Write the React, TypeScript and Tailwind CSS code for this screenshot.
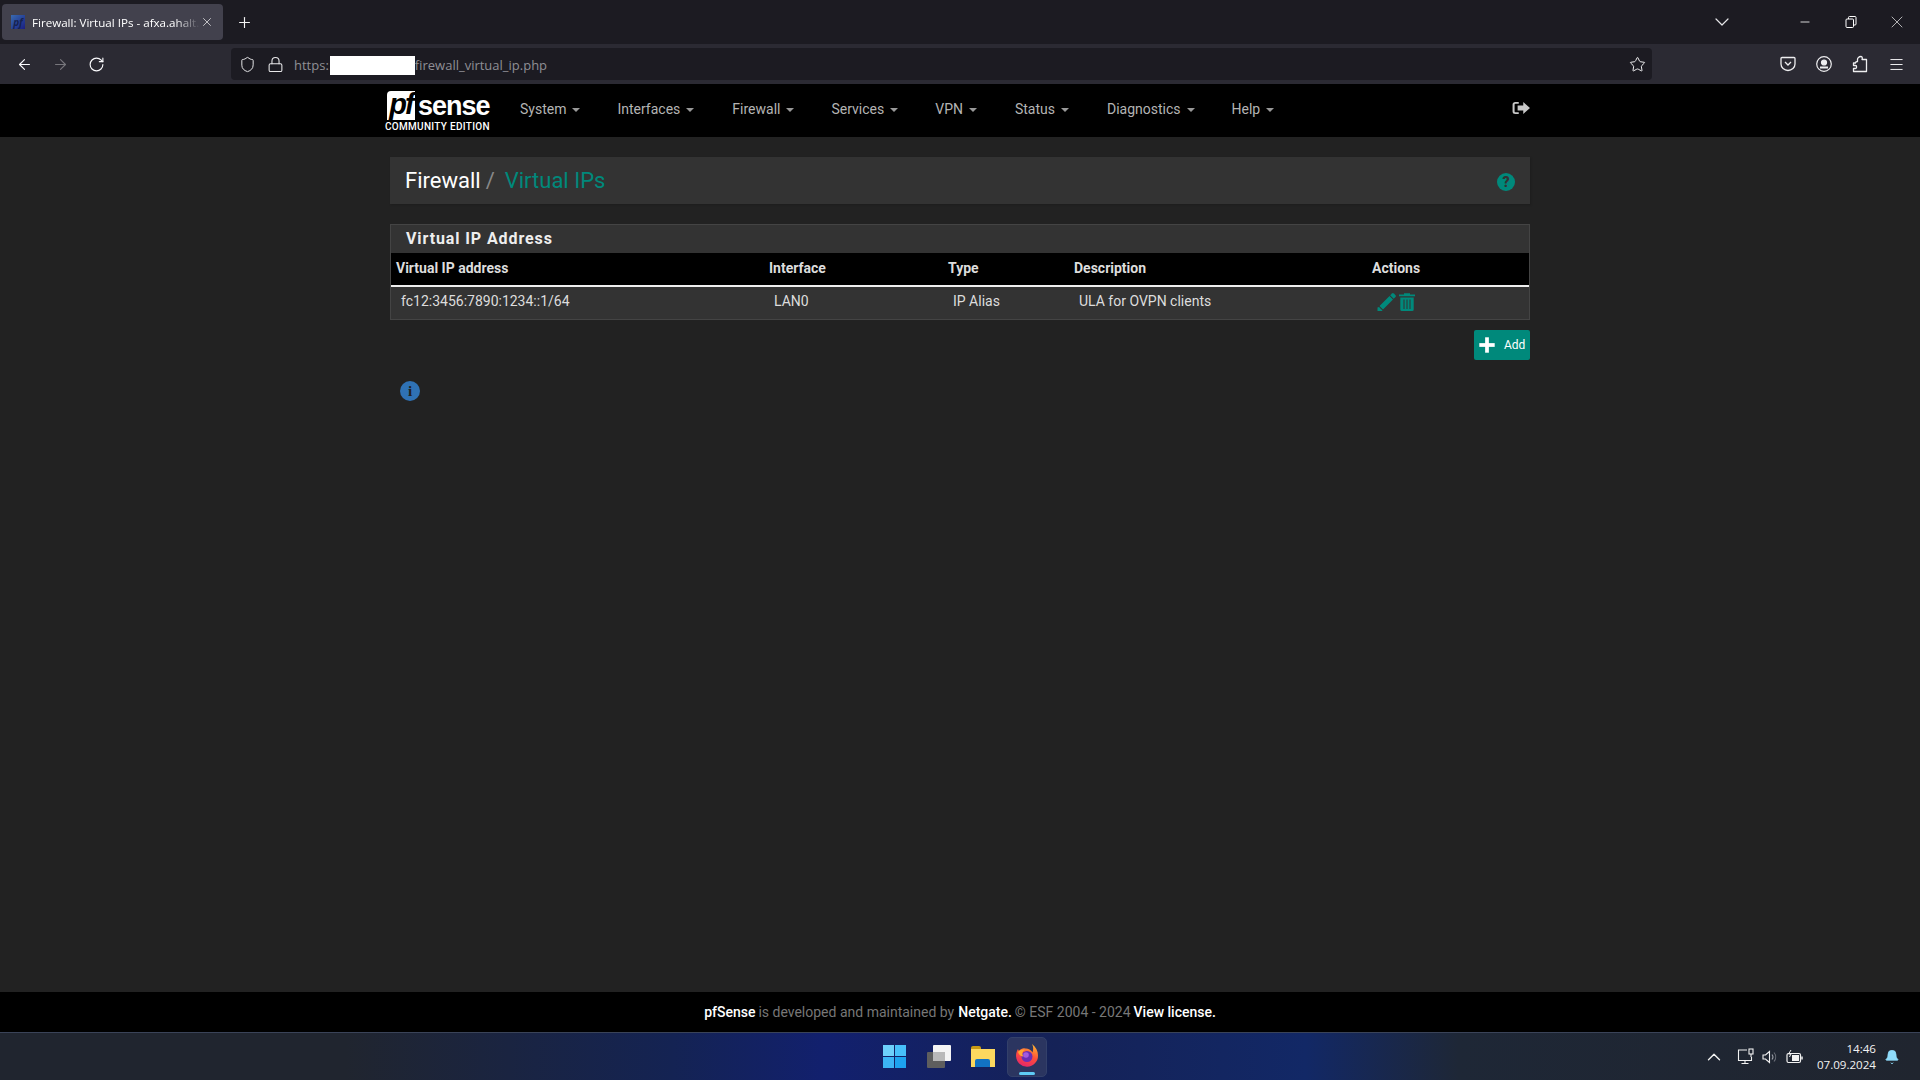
import React from 'react';
import { ArrowLeft, ArrowRight, RotateCw, Shield, Lock, Star, X, Plus, ChevronDown, Minus, Menu, ChevronUp, Bell } from 'lucide-react';

const navItems = ['System', 'Interfaces', 'Firewall', 'Services', 'VPN', 'Status', 'Diagnostics', 'Help'];
const navGaps = ['mr-[37px]', 'mr-[38px]', 'mr-[37px]', 'mr-[37px]', 'mr-[38px]', 'mr-[38px]', 'mr-[37px]', ''];

function Caret() {
  return <span className="ml-[6px] inline-block w-0 h-0 border-x-[4px] border-x-transparent border-t-[4px] border-t-[#999999] align-middle" />;
}

function App() {
  return (
    <div className="w-[1920px] h-[1080px] overflow-hidden flex flex-col bg-[#222222] font-['Roboto',sans-serif] text-[14px] text-[#dddddd]">
      {/* Browser tabs */}
      <div className="h-[44px] shrink-0 bg-[#1c1b22] flex items-center pl-[2px]">
        <div className="w-[221px] h-[36px] rounded-[4px] bg-[#42414d] flex items-center pl-[9px] font-['Segoe_UI','Open_Sans',sans-serif] text-[11.6px] text-white">
          <div className="w-[14px] h-[14px] mr-[7px] bg-gradient-to-br from-[#3a6ab0] to-[#1c1c80] text-[10px] italic font-bold leading-[14px] text-center text-[#16224f] shrink-0">pf</div>
          <span className="w-[168px] mt-[2px] overflow-hidden whitespace-nowrap [mask-image:linear-gradient(to_right,black_85%,transparent)]">Firewall: Virtual IPs - afxa.ahalt.de</span>
          <X size={14} strokeWidth={1.3} className="shrink-0 text-[#e8e8ea]" />
        </div>
        <Plus size={17} strokeWidth={1.6} className="ml-[13px] text-[#f4f4f5]" />
        <div className="flex-1" />
        <ChevronDown size={24} strokeWidth={1.2} className="mr-[64px] text-[#e5e5e8]" />
        <Minus size={14} strokeWidth={1.4} className="mr-[33px] text-white" />
        <svg width="12" height="12" viewBox="0 0 12 12" fill="none" stroke="white" strokeWidth="1" className="mr-[30px]"><rect x="1" y="3" width="7.500" height="8.500" rx="1" /><path d="M3.500 3V1.500a1 1 0 0 1 1-1h5.500a1 1 0 0 1 1 1V8a1 1 0 0 1-1 1H8.500" /></svg>
        <X size={20} strokeWidth={0.8} className="mr-[13px] text-white" />
      </div>

      {/* Browser toolbar */}
      <div className="h-[40px] shrink-0 bg-[#2b2a33] flex items-center text-[#fbfbfe]">
        <div className="w-[231px] pl-[16px] flex items-center gap-[19px]">
          <ArrowLeft size={17} strokeWidth={1.6} />
          <ArrowRight size={17} strokeWidth={1.6} className="text-[#77767c]" />
          <RotateCw size={17} strokeWidth={1.6} />
        </div>
        <div className="w-[1421px] h-[32px] rounded-[4px] bg-[#1c1b22] flex items-center pl-[8px] pr-[6px] font-['Segoe_UI','Open_Sans',sans-serif] text-[13px] text-[#8f8f95]">
          <Shield size={17} strokeWidth={1.4} className="text-[#e8e8ea] mr-[11px]" />
          <Lock size={17} strokeWidth={1.5} className="text-[#e8e8ea] mr-[10px]" />
          <span className="mt-[3px]">https:</span>
          <div className="w-[85px] h-[19px] ml-[1px] mt-[3px] bg-white" />
          <span className="mt-[3px]">firewall_virtual_ip.php</span>
          <div className="flex-1" />
          <Star size={17} strokeWidth={1.4} className="text-[#f0f0f2]" />
        </div>
        <div className="flex items-center pl-[128px] gap-[20px] text-[#eeeef0]">
          <svg width="16" height="16" viewBox="0 0 16 16" fill="none" stroke="currentColor" strokeWidth="1.300"><path d="M2 1.500h12a1 1 0 0 1 1 1V8a7 6.500 0 0 1-14 0V2.500a1 1 0 0 1 1-1z" /><path d="M5 6l3 3 3-3" /></svg>
          <svg width="16" height="18" viewBox="0 0 16 18" fill="none" stroke="currentColor" strokeWidth="1.200"><circle cx="8" cy="9" r="7.300" /><circle cx="8" cy="7.500" r="2.500" fill="currentColor" /><path d="M4 12.500h8" strokeWidth="2" /></svg>
          <svg width="16" height="18" viewBox="0 0 16 18" fill="none" stroke="currentColor" strokeWidth="1.300" strokeLinejoin="round"><path d="M9 1.500c1.500 0 1.500 2 1 3h4.500v12H1.500v-3h2c1.500 0 1.500-3 0-3h-2V8h2c0-1 1-1.500 2-1.500V4.500c0-1 1-3 3.500-3z" /></svg>
          <Menu size={17} strokeWidth={1.4} />
        </div>
      </div>

      {/* Nav */}
      <nav className="h-[53px] shrink-0 bg-black">
        <div className="w-[1140px] mx-auto h-full flex items-center text-[#b4b4b4]">
          <div className="w-[135px] -ml-[5px] h-full flex flex-col items-start pt-[7px]">
            <div className="flex items-end h-[29px] ml-[2px]">
              <span className="w-[28px] h-[29px] bg-white text-black rounded-tl-[4px] font-['Liberation_Sans',sans-serif] font-bold italic text-[29px] leading-[27px] text-center tracking-[-2px]">pf</span>
              <span className="text-white font-['Liberation_Sans',sans-serif] font-bold text-[27px] leading-[28px] ml-[3px] tracking-[-1px]">sense</span>
            </div>
            <span className="text-white text-[10px] font-medium leading-[10px] mt-[2px] tracking-[0.3px] whitespace-nowrap">COMMUNITY EDITION</span>
          </div>
          {navItems.map((item, i) => (
            <span key={item} className={`${navGaps[i]} mb-[2px] whitespace-nowrap`}>{item}<Caret /></span>
          ))}
          <div className="flex-1" />
          <svg width="18" height="14" viewBox="0 0 16 14" preserveAspectRatio="none" className="mb-[5px]" fill="#c8c8c8"><path d="M6 1H3a2.500 2.500 0 0 0-2.500 2.500v7A2.500 2.500 0 0 0 3 13h3v-1.800H3a.7.7 0 0 1-.7-.7v-7a.7.7 0 0 1 .7-.7h3z" /><path d="M10 1l6 6-6 6V9.500H5v-5h5z" /></svg>
        </div>
      </nav>

      {/* Content */}
      <main className="flex-1 min-h-0 w-[1140px] mx-auto pt-[20px]">
        <div className="h-[47px] bg-[#333333] flex items-center px-[15px] shadow-[1px_1px_2px_rgba(0,0,0,0.15)]">
          <h1 className="text-[22px] text-white font-normal whitespace-nowrap">Firewall<span className="text-[#888888] ml-[5px] mr-[10px]">/</span><span className="text-[#00897b]">Virtual IPs</span></h1>
          <div className="flex-1" />
          <span className="w-[18px] h-[18px] mt-[2px] rounded-full bg-[#00897b] text-[#333333] text-[14px] font-black leading-[18px] text-center">?</span>
        </div>

        <section className="mt-[20px] border border-[#444444] bg-[#333333]">
          <h2 className="h-[28px] pl-[15px] leading-[28px] text-[16px] font-bold tracking-[0.9px] text-[#eeeeee]">Virtual IP Address</h2>
          <table className="w-full table-fixed border-collapse">
            <thead>
              <tr className="h-[33px] bg-black border-b-2 border-[#eeeeee] text-left text-[14px] font-bold text-[#dddddd]">
                <th className="w-[377px] pl-[5px] pb-[1px] font-bold">Virtual IP address</th>
                <th className="w-[179px] pl-[1px] pb-[1px] font-bold">Interface</th>
                <th className="w-[126px] pl-[1px] pb-[1px] font-bold">Type</th>
                <th className="w-[298px] pl-[1px] pb-[1px] font-bold">Description</th>
                <th className="pl-[1px] pb-[1px] font-bold">Actions</th>
              </tr>
            </thead>
            <tbody>
              <tr className="h-[33px]">
                <td className="pl-[10px] pb-[3px]">fc12:3456:7890:1234::1/64</td>
                <td className="pl-[6px] pb-[3px]">LAN0</td>
                <td className="pl-[6px] pb-[3px]">IP Alias</td>
                <td className="pl-[6px] pb-[3px]">ULA for OVPN clients</td>
                <td className="pl-[6px] pb-[3px]">
                  <div className="flex items-center gap-[3px] text-[#00897b]">
                    <svg width="19" height="18" viewBox="0 0 19 18" fill="currentColor"><path d="M15 .5a1.300 1.300 0 0 1 1.800 0l1.700 1.700a1.300 1.300 0 0 1 0 1.800l-1.800 1.800-3.500-3.500z" /><path d="M12.500 3l3.500 3.500L6 16.500 2.500 13zM2 14l3.500 3.500-.5.500H.5v-3.500z" /></svg>
                    <svg width="16" height="18" viewBox="0 0 16 18" fill="currentColor"><path d="M0 1.500h5V.3h6v1.200h5v1.800H0z" /><path fillRule="evenodd" d="M1.300 4.500h13.400v12A1.500 1.500 0 0 1 13.200 18H2.800a1.500 1.500 0 0 1-1.500-1.500zM4.500 6.500v9.500h1v-9.500zM7.500 6.500v9.500h1v-9.500zM10.500 6.500v9.500h1v-9.500z" /></svg>
                  </div>
                </td>
              </tr>
            </tbody>
          </table>
        </section>

        <div className="mt-[10px] flex justify-end">
          <button className="w-[56px] h-[30px] rounded-[2px] bg-[#00897b] text-white text-[12px] flex items-center pl-[3px] gap-[7px]">
            <Plus size={20} strokeWidth={4.5} strokeLinecap="square" />
            <span>Add</span>
          </button>
        </div>

        <div className="mt-[21px] ml-[10px] w-[20px] h-[20px] rounded-full bg-[#2f72b5] text-[#222222] text-center text-[15px] font-black leading-[20px] font-['Liberation_Serif',serif]">i</div>
      </main>

      {/* Footer */}
      <footer className="h-[40px] shrink-0 bg-black flex items-center justify-center text-[14px] text-[#777777]">
        <span className="text-white font-medium">pfSense</span>
        <span className="ml-[3px] mr-[4px]">is developed and maintained by</span>
        <span className="text-white font-medium">Netgate.</span>
        <span className="mx-[3px]">© ESF 2004 - 2024</span>
        <span className="text-white font-medium">View license.</span>
      </footer>

      {/* Windows taskbar */}
      <div className="h-[48px] shrink-0 border-t border-[#3a4358] bg-[linear-gradient(to_right,#20252f_0%,#20252f_18%,#142353_35%,#12206e_43%,#152257_55%,#122866_68%,#1e2736_76%,#20252f_100%)] flex items-center relative">
        <div className="flex-1" />
        <div className="absolute left-[883px] top-0 h-[47px] flex items-center">
          <div className="w-[23px] h-[23px] grid grid-cols-2 grid-rows-2 gap-[1px] mr-[21px]">
            <span className="bg-[#6dd0fb]" /><span className="bg-[#47c0fb]" /><span className="bg-[#3cb4f5]" /><span className="bg-[#1da3f0]" />
          </div>
          <div className="relative w-[24px] h-[24px] mr-[20px]">
            <span className="absolute left-0 top-[7px] w-[18px] h-[16px] bg-[#5e5e5e] rounded-[1px]" />
            <span className="absolute left-[6px] top-0 w-[18px] h-[16px] bg-[#f4f4f4] rounded-[1px]" />
            <span className="absolute left-[6px] top-[7px] w-[12px] h-[9px] bg-[#b9b9b9]" />
          </div>
          <div className="relative w-[24px] h-[21px] mr-[12px]">
            <span className="absolute left-0 top-0 w-[10px] h-[5px] bg-[#c99a14] rounded-t-[2px]" />
            <span className="absolute left-0 top-[3px] w-[24px] h-[18px] bg-[#fcd85f]" />
            <span className="absolute left-[4px] top-[13px] w-[15px] h-[8px] bg-[#1273c4] rounded-t-[2px]" />
          </div>
          <div className="relative w-[40px] h-[40px] rounded-[5px] bg-[#2b3560] border border-[#33406a] flex items-center justify-center">
            <svg width="24" height="24" viewBox="0 0 24 24" className="mb-[3px]">
              <defs>
                <linearGradient id="fx" x1="0.7" y1="0" x2="0.3" y2="1"><stop offset="0" stopColor="#ffb32e" /><stop offset="0.5" stopColor="#ff4f3a" /><stop offset="1" stopColor="#e3256b" /></linearGradient>
              </defs>
              <path d="M17 1c4 3 6 7 6 11.500A11 11 0 0 1 1 13c0-3 .8-5 2-7 .3 1 .7 1.500 1.200 2C5.500 6 8 5 10 5.500c2-.5 6 1 7.500 4C18.500 6.500 18.500 3.500 17 1z" fill="url(#fx)" />
              <circle cx="12" cy="13.500" r="5.500" fill="#6a2fb5" />
              <circle cx="11" cy="12" r="2.800" fill="#a35be0" />
              <path d="M3 9c2-2.500 5-3 7-2-2.500 1-3.500 4-1.500 6.500C6 13.500 4 12 3 9z" fill="#ffa631" />
            </svg>
            <span className="absolute bottom-[1px] w-[16px] h-[3px] rounded-full bg-[#5ecbf5]" />
          </div>
        </div>
        <div className="flex items-center text-[#f2f2f2]">
          <ChevronUp size={22} strokeWidth={1.5} className="mr-[12px]" />
          <svg width="17" height="17" viewBox="0 0 17 17" fill="none" stroke="currentColor" strokeWidth="1.100" className="mr-[8px]"><path d="M10 2H1.500v10.500h13V9M8 12.500V15.500M4.500 15.500h7" /><rect x="12" y="1" width="4" height="5" /><path d="M14 6v3" /></svg>
          <svg width="16" height="16" viewBox="0 0 16 16" fill="none" stroke="currentColor" strokeWidth="1.100" className="mr-[8px]"><path d="M1 6h2.500L7.500 2.500v11L3.500 10H1z" /><path d="M10 5.500a4 4 0 0 1 0 5" stroke="#9a9ea6" /><path d="M12 3.500a7 7 0 0 1 0 9" stroke="#6b6f78" /></svg>
          <svg width="17" height="14" viewBox="0 0 17 14" fill="none" stroke="currentColor" strokeWidth="1.200" className="mr-[13px]"><rect x="1" y="3.500" width="13.500" height="9" rx="1.500" /><rect x="6" y="5" width="7" height="6" fill="currentColor" stroke="none" /><path d="M16 6.500v3" strokeWidth="1.500" /><path d="M5 0L2.500 4H5L3.500 7" strokeWidth="1" /></svg>
          <div className="w-[60px] mr-[8px] text-right font-['Segoe_UI','Open_Sans',sans-serif] text-[11.6px] leading-[16px]">
            <div>14:46</div>
            <div>07.09.2024</div>
          </div>
          <Bell size={16} fill="#8fdcfb" strokeWidth={1} className="mr-[20px] text-[#8fdcfb]" />
        </div>
      </div>
    </div>
  );
}

export default App;
